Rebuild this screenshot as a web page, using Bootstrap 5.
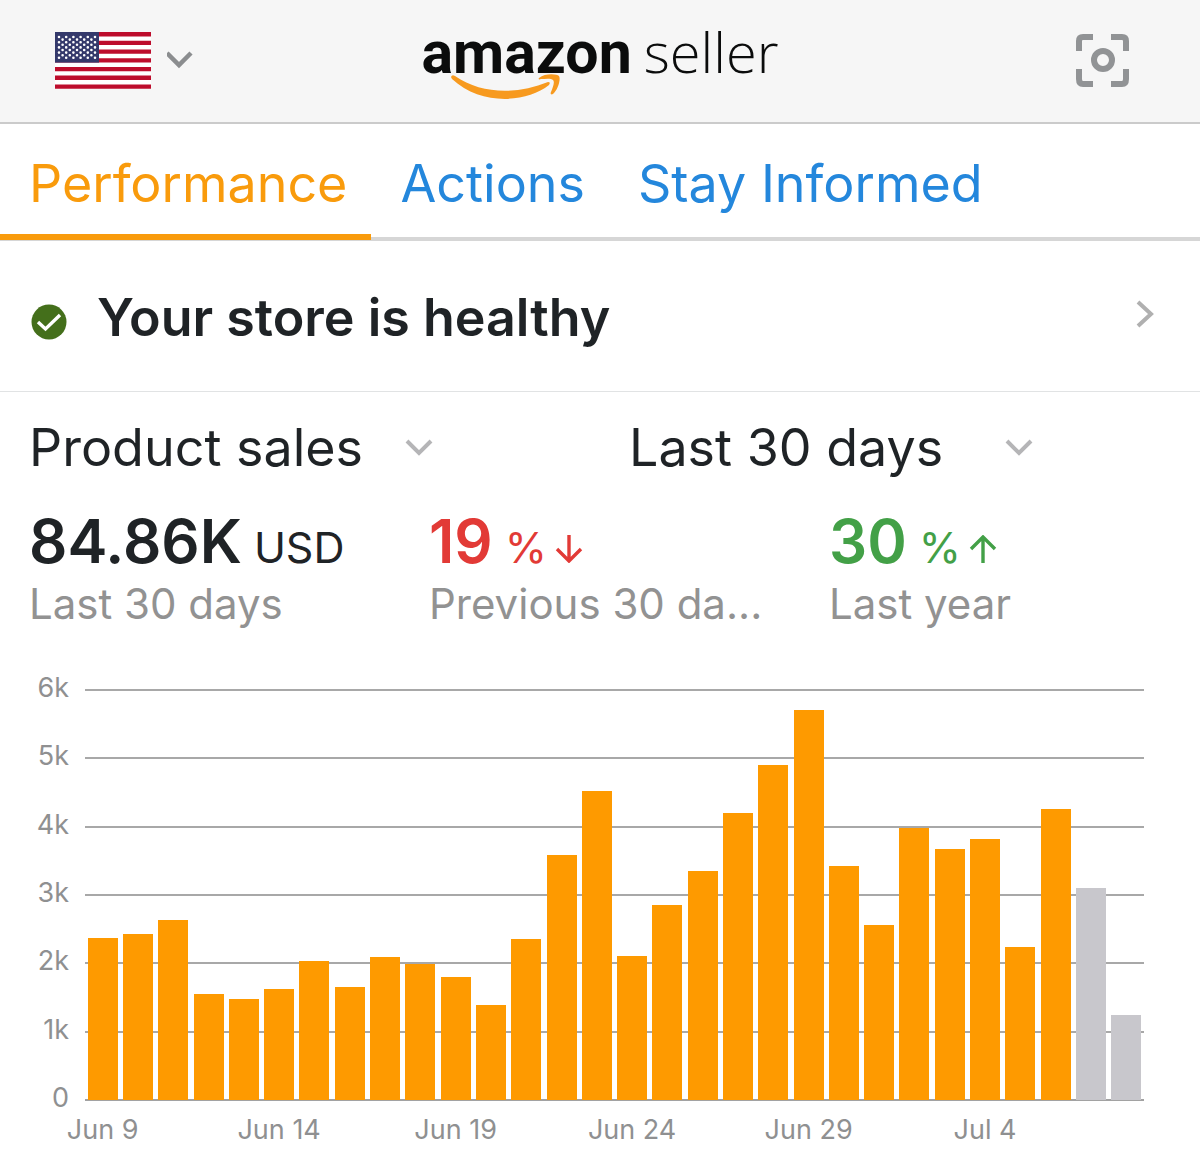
<!DOCTYPE html>
<html lang="en">
<head>
<meta charset="utf-8">
<meta name="viewport" content="width=device-width, initial-scale=1">
<title>Amazon Seller</title>
<link href="https://cdn.jsdelivr.net/npm/bootstrap@5.3.0/dist/css/bootstrap.min.css" rel="stylesheet">
<style>
  body { font-family: Inter, "Liberation Sans", sans-serif; color: #1f2326; background: #fff; }
  svg { display: block; flex: none; }
  .topbar { height: 124px; background: #f6f6f6; border-bottom: 2px solid #cbcbcb; padding: 0 55px 2px; }
  .brand { line-height: 64px; gap: 12px; color: #0b0c0c; text-decoration: none; }
  .brand-bold { font: 700 59px/64px Roboto, sans-serif; }
  .brand-thin { font: 300 56px/64px "Open Sans", sans-serif; }
  .brand-smile { left: 29px; top: 55px; }
  .tabs { border-bottom: 4px solid #d6d6d6; padding-top: 30px; }
  .tabs a { font-size: 52px; line-height: 60px; padding: 0 24px 20px 29px; color: #2487dc; text-decoration: none; border-bottom: 6px solid transparent; margin-bottom: -3px; }
  .tabs a.active { color: #f99b0c; border-color: #f99b0c; }
  .health { padding: 47px 46px 43px 31px; gap: 30px; color: inherit; text-decoration: none; border-bottom: 1px solid #e1e3e4; }
  .health h1 { font-size: 52px; line-height: 60px; font-weight: 600; }
  .filters { padding-top: 20px; }
  .inset { padding-left: 29px; }
  .picker { max-width: 404px; }
  .picker select { appearance: none; border: 0; padding: 0; background: none; color: inherit; font-size: 52px; line-height: 72px; height: 72px; overflow: visible; }
  .stats { padding-top: 25px; }
  .amount { font-size: 60px; line-height: 64px; font-weight: 600; }
  .unit { font-size: 43px; line-height: 44px; font-weight: 400; margin-left: 12px; }
  .caption-line { font-size: 42px; line-height: 52px; color: #929292; margin-top: 5px; }
  .down { color: #e23a36; }
  .up { color: #43a047; }
  .chart { margin-top: 44px; padding-right: 56px; padding-bottom: 16px; font-size: 27px; line-height: 28px; color: #8f9091; }
  .y-axis { width: 69px; margin-right: 16px; }
  .plot { display: grid; height: 412px; margin: 15px 0 11px; }
  .plot > div { grid-area: 1 / 1; }
  .gridlines { border-bottom: 2px solid #a2a2a2; }
  .gridlines div { border-top: 2px solid #a8a8a8; }
  .bars { padding-bottom: 1px; }
  .slot { flex: 1 1 0; min-width: 0; }
  .bar { width: 85%; background: #fe9a00; }
  .bar.partial { background: #c8c7cc; }
  .x-axis { margin: 4px 0 0 85px; }
</style>
<script src="https://cdn.jsdelivr.net/npm/bootstrap@5.3.0/dist/js/bootstrap.bundle.min.js"></script>
</head>
<body>
<header class="topbar d-flex align-items-center">
  <div class="col d-flex">
    <button type="button" class="btn p-0 border-0 d-flex align-items-center" aria-label="Choose marketplace">
      <svg width="96" height="57" viewBox="0 0 96 57">
        <rect width="96" height="57" fill="#fff"/>
        <path stroke="#bd0d2c" stroke-width="4.4" d="M0 2.2H96M0 10.9H96M0 19.6H96M0 28.4H96M0 37.1H96M0 45.8H96M0 54.6H96"/>
        <rect width="44" height="30.6" fill="#34396b"/>
        <g stroke="#fff" stroke-width="2.6" stroke-linecap="round" stroke-dasharray="0 7.2">
          <path d="M4 5H41M4 10.2H41M4 15.4H41M4 20.6H41M4 25.8H41"/>
          <path d="M7.6 7.6H38M7.6 12.8H38M7.6 18H38M7.6 23.2H38"/>
        </g>
      </svg>
      <svg class="ms-3" width="26" height="18" viewBox="0 0 26 18" fill="none" stroke="#8b8d8f" stroke-width="4.5"><path d="M0 2 12 14 24 2"/></svg>
    </button>
  </div>
  <a href="#" class="brand position-relative d-flex align-items-baseline mb-3">
    <span class="brand-bold">amazon</span><span class="brand-thin">seller</span>
    <svg class="brand-smile position-absolute" width="112" height="28" viewBox="0 0 112 28" fill="#f79a1f">
      <path d="M0 3Q1 0 4 2C30 20 65 21 97 8Q100 8 98 11C75 29 30 32 1 5Z"/>
      <path d="M88 4C94-1 106 0 108 2 110 5 107 16 102 20 100 21 99 20 100 18 102 13 104 8 102 6 100 4 94 5 90 5 88 6 87 5 88 4Z"/>
    </svg>
  </a>
  <div class="col d-flex justify-content-end">
    <button type="button" class="btn p-0 border-0 me-3" aria-label="Scan">
      <svg width="54" height="54" viewBox="0 0 54 54" fill="none" stroke="#919395" stroke-width="6">
        <path d="M4 18V8Q4 4 8 4H18M36 4H47Q51 4 51 8V18M51 36V46Q51 51 47 51H36M18 51H8Q4 51 4 46V36"/>
        <circle cx="28" cy="27" r="9"/>
      </svg>
    </button>
  </div>
</header>

<nav class="tabs d-flex">
  <a href="#" class="active" aria-current="page">Performance</a>
  <a href="#">Actions</a>
  <a href="#">Stay Informed</a>
</nav>

<main>
  <a href="#" class="health d-flex align-items-center">
    <svg class="mt-2" width="36" height="36" viewBox="0 0 36 36"><circle cx="18" cy="18" r="17.5" fill="#446f1b"/><path d="M7 18 14.500 25 29 11" fill="none" stroke="#fff" stroke-width="3.400"/></svg>
    <h1 class="m-0 flex-grow-1">Your store is healthy</h1>
    <svg class="mb-2" width="18" height="28" viewBox="0 0 18 28" fill="none" stroke="#b0b0b0" stroke-width="4"><path d="M2 2 15 14 2 26"/></svg>
  </a>

  <div class="filters row g-0">
    <div class="col-6 inset">
      <div class="picker d-flex align-items-center justify-content-between">
        <label class="visually-hidden" for="metric">Metric</label>
        <select id="metric"><option>Product sales</option></select>
        <svg width="28" height="20" viewBox="0 0 28 20" fill="none" stroke="#b5b5b7" stroke-width="4"><path d="M2 3 14 15 26 3"/></svg>
      </div>
    </div>
    <div class="col-6 inset">
      <div class="picker d-flex align-items-center justify-content-between">
        <label class="visually-hidden" for="period">Period</label>
        <select id="period"><option>Last 30 days</option></select>
        <svg width="28" height="20" viewBox="0 0 28 20" fill="none" stroke="#b5b5b7" stroke-width="4"><path d="M2 3 14 15 26 3"/></svg>
      </div>
    </div>
  </div>

  <div class="stats row g-0 text-nowrap">
    <div class="col-4 inset">
      <div class="amount d-flex align-items-baseline">84.86K<span class="unit">USD</span></div>
      <div class="caption-line">Last 30 days</div>
    </div>
    <div class="col-4 inset">
      <div class="amount down d-flex align-items-baseline">19<span class="unit">%</span>
        <svg class="ms-2" width="28" height="28" viewBox="0 0 28 28" fill="none" stroke="currentColor" stroke-width="3.400"><path d="M14 0V26M2 14 14 26 26 14"/></svg>
      </div>
      <div class="caption-line">Previous 30 da...</div>
    </div>
    <div class="col-4 inset">
      <div class="amount up d-flex align-items-baseline">30<span class="unit">%</span>
        <svg class="ms-2" width="28" height="28" viewBox="0 0 28 28" fill="none" stroke="currentColor" stroke-width="3.400"><path d="M14 28V2M2 14 14 2 26 14"/></svg>
      </div>
      <div class="caption-line">Last year</div>
    </div>
  </div>

  <section class="chart" aria-label="Daily product sales">
    <div class="d-flex">
      <div class="y-axis d-flex flex-column justify-content-between text-end">
        <span>6k</span><span>5k</span><span>4k</span><span>3k</span><span>2k</span><span>1k</span><span>0</span>
      </div>
      <div class="plot flex-grow-1">
        <div class="gridlines d-flex flex-column">
          <div class="col"></div><div class="col"></div><div class="col"></div><div class="col"></div><div class="col"></div><div class="col"></div>
        </div>
        <div class="bars d-flex" id="bars"></div>
      </div>
    </div>
    <div class="x-axis d-flex text-nowrap" id="dates"></div>
  </section>
</main>

<script>
  // Daily sales as a percentage of the 6k axis; the last two days are still partial.
  const sales = [39.3, 40.5, 43.7, 25.9, 24.5, 26.9, 33.8, 27.4, 34.9, 33.2, 30, 23.2, 39.2, 59.5, 75.2,
                 35, 47.4, 55.8, 69.8, 81.4, 95, 56.9, 42.5, 66.3, 61.1, 63.4, 37.2, 70.9, 51.5, 20.6];
  const labels = { 0: "Jun 9", 5: "Jun 14", 10: "Jun 19", 15: "Jun 24", 20: "Jun 29", 25: "Jul 4" };
  document.getElementById("bars").innerHTML = sales.map((v, i) =>
    `<div class="slot d-flex align-items-end justify-content-center"><div class="bar${i > 27 ? " partial" : ""}" style="height:${v}%"></div></div>`).join("");
  document.getElementById("dates").innerHTML = sales.map((v, i) =>
    `<div class="slot d-flex justify-content-center">${labels[i] ? `<span>${labels[i]}</span>` : ""}</div>`).join("");
</script>
</body>
</html>
